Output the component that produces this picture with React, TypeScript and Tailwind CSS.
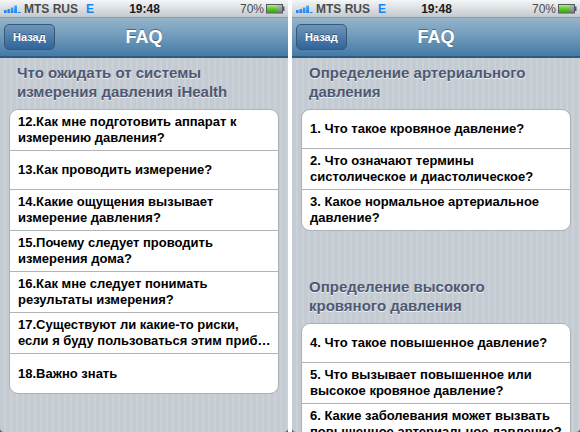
import React from 'react';

interface FaqSection {
  title: string;
  questions: string[];
}

const measurementSections: FaqSection[] = [
  {
    title: 'Что ожидать от системы измерения давления iHealth',
    questions: [
      '12.Как мне подготовить аппарат к измерению давления?',
      '13.Как проводить измерение?',
      '14.Какие ощущения вызывает измерение давления?',
      '15.Почему следует проводить измерения дома?',
      '16.Как мне следует понимать результаты измерения?',
      '17.Существуют ли какие-то риски, если\u00a0я буду пользоваться этим приб…',
      '18.Важно знать',
    ],
  },
];

const pressureSections: FaqSection[] = [
  {
    title: 'Определение артериального давления',
    questions: [
      '1. Что такое кровяное давление?',
      '2. Что означают термины систолическое и диастолическое?',
      '3. Какое нормальное артериальное давление?',
    ],
  },
  {
    title: 'Определение высокого кровяного давления',
    questions: [
      '4. Что такое повышенное давление?',
      '5. Что вызывает повышенное или высокое кровяное давление?',
      '6. Какие заболевания может вызвать повышенное артериальное давление?',
    ],
  },
];

const SignalIcon: React.FC = () => (
  <svg className="w-[17px] h-2.5" viewBox="0 0 17 10" aria-hidden="true">
    <defs>
      <linearGradient id="signal" x1="0" y1="0" x2="0" y2="10" gradientUnits="userSpaceOnUse">
        <stop offset="0" stopColor="#55b4ff" />
        <stop offset="1" stopColor="#1676ea" />
      </linearGradient>
    </defs>
    <g fill="url(#signal)">
      <rect x="0" y="6" width="2.6" height="3" />
      <rect x="3.4" y="5" width="2.6" height="4" />
      <rect x="6.8" y="3.5" width="2.6" height="5.5" />
      <rect x="10.2" y="1.5" width="2.8" height="7.5" />
      <rect x="13.8" y="8" width="2.8" height="1" />
    </g>
  </svg>
);

const BatteryIcon: React.FC = () => (
  <svg className="w-[19px] h-2.5" viewBox="0 0 19 10" aria-hidden="true">
    <defs>
      <linearGradient id="charge" x1="0" y1="0" x2="0" y2="1">
        <stop offset="0" stopColor="#b4ea93" />
        <stop offset="0.45" stopColor="#62cf32" />
        <stop offset="1" stopColor="#37a312" />
      </linearGradient>
      <linearGradient id="empty" x1="0" y1="0" x2="0" y2="1">
        <stop offset="0" stopColor="#b9bcc0" />
        <stop offset="1" stopColor="#76797d" />
      </linearGradient>
    </defs>
    <rect x="0.5" y="0.5" width="16" height="8.5" fill="url(#empty)" stroke="#55595c" />
    <rect x="1" y="1" width="11" height="7.5" fill="url(#charge)" />
    <path d="M17 2.5h1.5v4.5H17z" fill="#55595c" />
  </svg>
);

const StatusBar: React.FC = () => (
  <div className="grid grid-cols-[1fr_auto_1fr] items-center h-[18px] pl-1 pr-[3px] bg-linear-to-b from-[#f4f6f7] to-[#c3cace] border-b border-[#8f999f] text-xs font-bold">
    <div className="flex items-center text-[#4b4c4e]">
      <SignalIcon />
      <span className="ml-[3px]">MTS RUS</span>
      <span className="ml-2 text-[#1a84f5]">E</span>
    </div>
    <span className="text-[#1b1b1c]">19:48</span>
    <div className="flex items-center justify-end gap-0.5 text-[#4b4c4e]">
      <span className="font-normal">70%</span>
      <BatteryIcon />
    </div>
  </div>
);

const NavBar: React.FC = () => (
  <header className="grid grid-cols-[1fr_auto_1fr] items-center h-10 px-1 bg-linear-to-b from-[#96b4cb] via-[#6f99b9] to-[#447aa6] border-b-2 border-[#2c5a83]">
    <div>
      <button className="h-[26px] px-2 rounded-[5px] border border-[#36597c] bg-linear-to-b from-[#6e96b9] to-[#30649a] text-white text-[11px] leading-4 font-bold text-shadow-[0_-1px_0_rgb(0_0_0/0.4)]">
        Назад
      </button>
    </div>
    <h1 className="text-lg leading-5 font-bold text-white text-shadow-[0_-1px_0_rgb(0_0_0/0.4)]">FAQ</h1>
  </header>
);

const Section: React.FC<{ section: FaqSection }> = ({ section }) => (
  <section className="mb-[46px]">
    <h2 className="px-2 text-[15px] leading-[19px] font-bold text-[#4e5872] text-shadow-[0_1px_0_rgb(255_255_255/0.7)]">
      {section.title}
    </h2>
    <ul className="mt-2 rounded-[9px] border border-[#adb0b4] bg-white overflow-hidden divide-y divide-[#b2b4b6]">
      {section.questions.map(question => (
        <li key={question} className="flex items-center min-h-[39px] pl-2 pr-1 py-1">
          <span className="text-[13px] leading-4 font-bold text-black">{question}</span>
        </li>
      ))}
    </ul>
  </section>
);

const Phone: React.FC<{ sections: FaqSection[] }> = ({ sections }) => (
  <div className="flex flex-1 min-w-0 bg-[#4f5a66]">
    <div className="flex flex-col flex-1 min-w-0 overflow-hidden rounded-b-[4px]">
      <StatusBar />
      <NavBar />
      <main className="flex-1 min-h-0 overflow-hidden px-[9px] pt-[5px] bg-[repeating-linear-gradient(90deg,#c4cbd3_0_4px,#cad1d7_4px_6px)]">
        {sections.map(section => (
          <Section key={section.title} section={section} />
        ))}
      </main>
    </div>
  </div>
);

const App: React.FC = () => {
  return (
    <div className="flex gap-1 h-screen overflow-hidden bg-white font-['Liberation_Sans',Arial,sans-serif]">
      <Phone sections={measurementSections} />
      <Phone sections={pressureSections} />
    </div>
  );
};

export default App;
